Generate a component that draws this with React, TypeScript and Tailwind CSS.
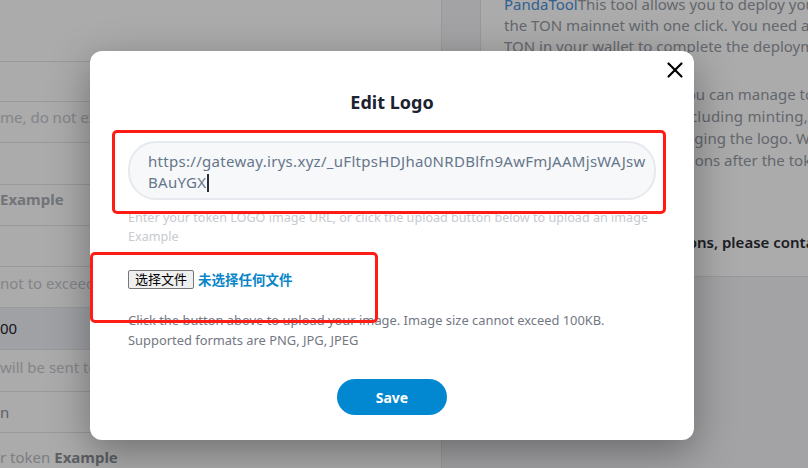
import { X } from "lucide-react";

const FONT = { fontFamily: '"Noto Sans", "Noto Sans CJK SC", sans-serif' };

function LeftForm() {
  return (
    <div className="flex h-full w-[442px] shrink-0 flex-col border-r border-[#e3e5e9] bg-white text-[15px]">
      <div className="h-[62px] shrink-0 border-b border-[#e3e5e9]" />
      <div className="h-[40px] shrink-0 border-b border-[#e3e5e9]" />
      <div className="flex h-[41px] shrink-0 items-center border-b border-[#e3e5e9] pb-[10px] whitespace-nowrap text-[#c3c6cc]">
        me, do not exceed 30 characters
      </div>
      <div className="h-[42px] shrink-0 border-b border-[#e3e5e9]" />
      <div className="flex h-[41px] shrink-0 items-center border-b border-[#e3e5e9] pb-[12px] font-bold whitespace-nowrap text-[#a9adb4]">
        Example
      </div>
      <div className="h-[41px] shrink-0 border-b border-[#e3e5e9]" />
      <div className="flex h-[41px] shrink-0 items-center border-b border-[#e3e5e9] pb-[8px] whitespace-nowrap text-[#c3c6cc]">
        not to exceed 9 digits
      </div>
      <div className="flex h-[42px] shrink-0 items-center border-b border-[#e3e5e9] bg-[#eef1f6] whitespace-nowrap text-[#1f2330]">
        00
      </div>
      <div className="flex h-[42px] shrink-0 items-center border-b border-[#e3e5e9] pb-[6px] whitespace-nowrap text-[#c3c6cc]">
        will be sent to your wallet
      </div>
      <div className="flex h-[41px] shrink-0 items-center border-b border-[#e3e5e9] whitespace-nowrap text-[#8b8f97]">
        n
      </div>
      <div className="flex h-[35px] shrink-0 items-center pt-[14px] whitespace-nowrap text-[#b9bcc3]">
        r token&nbsp;<span className="font-bold text-[#8b8f97]">Example</span>
      </div>
    </div>
  );
}

function InfoPanel() {
  return (
    <div className="flex min-w-0 flex-1 flex-col bg-[#f3f4f6] pl-[38px]">
      <div className="h-[277px] overflow-hidden border-b border-l border-[#e3e5e9] bg-white pl-[23px] text-[15px] leading-[21px] text-[#959aa3]">
        <div className="-mt-[6px] whitespace-nowrap">
          <span className="text-[#4a8fd6]">PandaTool</span>This tool allows you to deploy your
        </div>
        <div className="whitespace-nowrap">the TON mainnet with one click. You need at</div>
        <div className="whitespace-nowrap">TON in your wallet to complete the deployment</div>
        <div className="mt-[26px] whitespace-nowrap leading-[22px]">After token deployment, you can manage tokens</div>
        <div className="whitespace-nowrap leading-[22px] tracking-[0.2px]">in the token's consoles, including minting, burning</div>
        <div className="whitespace-nowrap leading-[22px]">freezing, burning and changing the logo. We will</div>
        <div className="whitespace-nowrap leading-[22px]">and revoke admin permissions after the token is</div>
        <div className="mt-[61px] whitespace-nowrap font-semibold text-[#2a2d35]">If you do have any questions, please contact</div>
      </div>
    </div>
  );
}

function EditLogoModal() {
  return (
    <div className="relative ml-[90px] mt-[51px] h-[389px] w-[604px] rounded-[12px] bg-white px-[38px] shadow-[0_12px_40px_rgba(0,0,0,0.35)]">
      <button className="absolute right-[6px] top-[6px] text-black">
        <X className="size-[26px]" strokeWidth={2} />
      </button>
      <h2 className="pt-[39px] text-center text-[18px] font-bold leading-[24px] text-[#1c2230]">Edit Logo</h2>
      <div className="mt-[27px] h-[59px] rounded-[28px] border-2 border-[#e6e9ee] bg-[#f6f8fa] px-[18px] pt-[8px] text-[15px] leading-[21px] tracking-[0.3px] text-[#66768a]">
        <div className="whitespace-nowrap">https://gateway.irys.xyz/_uFltpsHDJha0NRDBlfn9AwFmJAAMjsWAJsw</div>
        <div className="flex items-center whitespace-nowrap">
          BAuYGX<span className="ml-[1px] inline-block h-[18px] w-[1.5px] bg-[#2a2f3a]" />
        </div>
      </div>
      <p className="mt-[8px] whitespace-nowrap text-[12.6px] leading-[19px] text-[#c7cad0]">
        Enter your token LOGO image URL, or click the upload button below to upload an image
        <br />
        Example
      </p>
      <div className="mt-[23px] flex items-center gap-[4px]">
        <span className="flex h-[19px] items-center rounded-[2px] border border-[#767676] bg-[#efefef] px-[6px] text-[13px] text-black" style={{ fontFamily: '"Noto Sans CJK SC", sans-serif' }}>
          选择文件
        </span>
        <span className="text-[13.5px] font-bold text-[#0a86c9]" style={{ fontFamily: '"Noto Sans CJK SC", sans-serif' }}>
          未选择任何文件
        </span>
      </div>
      <p className="mt-[21px] whitespace-nowrap text-[12.9px] leading-[20px] text-[#737884]">
        Click the button above to upload your image. Image size cannot exceed 100KB.
        <br />
        Supported formats are PNG, JPG, JPEG
      </p>
      <div className="mt-[29px] flex justify-center">
        <button className="h-[36px] w-[110px] rounded-full bg-[#0288d1] text-[14px] font-bold text-white">Save</button>
      </div>
    </div>
  );
}

export default function App() {
  return (
    <div className="relative h-[468px] w-[808px] overflow-hidden bg-white" style={FONT}>
      <div className="flex h-full">
        <LeftForm />
        <InfoPanel />
      </div>
      <div className="absolute inset-0 bg-black/[0.33]">
        <EditLogoModal />
      </div>
      {/* annotation boxes */}
      <div className="pointer-events-none absolute left-[112px] top-[130px] h-[84px] w-[554px] rounded-[5px] border-[3px] border-[#ff1c14]" />
      <div className="pointer-events-none absolute left-[90px] top-[252px] h-[71px] w-[288px] rounded-[5px] border-[3px] border-[#ff1c14]" />
    </div>
  );
}
